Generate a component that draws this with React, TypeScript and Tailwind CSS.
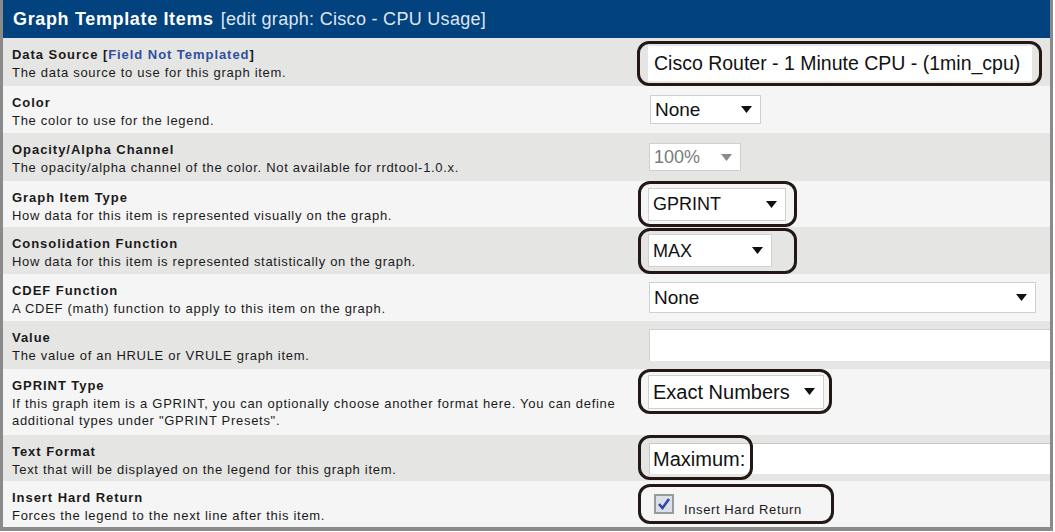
import React from "react";

const Arrow = ({ gray = false }: { gray?: boolean }) => (
  <svg width="11" height="7" viewBox="0 0 11 7" className="shrink-0">
    <polygon points="0,0 11,0 5.5,7" fill={gray ? "#8a8a8a" : "#111"} />
  </svg>
);

const Select = ({
  text,
  w,
  h,
  size = "text-[18px]",
  gray = false,
}: {
  text: string;
  w: string;
  h: string;
  size?: string;
  gray?: boolean;
}) => (
  <div
    className={`${w} ${h} flex items-center justify-between bg-white border border-[#d0d0d0] pl-[4px] pr-[8px] ${size} leading-none ${gray ? "text-[#7a7a7a]" : "text-[#111]"}`}
  >
    <span>{text}</span>
    <Arrow gray={gray} />
  </div>
);

const Row = ({
  shade,
  h,
  label,
  desc,
  children,
  align = "items-center",
}: {
  shade: boolean;
  h: string;
  label: React.ReactNode;
  desc: React.ReactNode;
  children?: React.ReactNode;
  align?: string;
}) => (
  <div className={`flex ${h} ${shade ? "bg-[#e5e5e4]" : "bg-[#f5f5f5]"}`}>
    <div className="w-[634px] pl-[9px] pt-[8px]">
      <div className="text-[13px] font-bold leading-[18px] tracking-[0.95px] text-[#1a1a1a]">{label}</div>
      <div className="text-[13px] leading-[17px] tracking-[0.7px] text-[#1a1a1a]">{desc}</div>
    </div>
    <div className={`flex-1 flex ${align}`}>{children}</div>
  </div>
);

const Note = ({ children, cls }: { children: React.ReactNode; cls: string }) => (
  <div className={`flex items-center rounded-[12px] border-[3px] border-[#231815] ${cls}`}>{children}</div>
);

export default function App() {
  return (
    <div
      className="w-[1055px] h-[532px] bg-white"
      style={{ fontFamily: '"Liberation Sans", Arial, sans-serif' }}
    >
      <div className="w-[1053px] border-l-[3px] border-r-[3px] border-b-[4px] border-[#8a8a8a]">
        <div className="h-[38px] bg-[#02427f] flex items-center pl-[10px] text-[18px] leading-none">
          <span className="font-bold text-white tracking-[0.65px]">Graph Template Items</span>
          <span className="text-[#dfe6ef] ml-[7px] tracking-[0.3px]">[edit graph: Cisco - CPU Usage]</span>
        </div>

        <Row
          shade
          h="h-[48px]"
          align="items-start pt-[3px]"
          label={
            <>
              Data Source <span>[</span>
              <span className="text-[#2f4f9f]">Field Not Templated</span>
              <span>]</span>
            </>
          }
          desc="The data source to use for this graph item."
        >
          <Note cls="w-[405px] h-[45px] pl-[8px]">
            <div className="w-[384px] h-[35px] bg-white flex items-center pl-[6px] text-[19.5px] text-[#111] leading-none">
              Cisco Router - 1 Minute CPU - (1min_cpu)
            </div>
          </Note>
        </Row>

        <Row shade={false} h="h-[47px]" label="Color" desc="The color to use for the legend.">
          <div className="ml-[13px]">
            <Select text="None" w="w-[111px]" h="h-[29px]" size="text-[19px]" />
          </div>
        </Row>

        <Row
          shade
          h="h-[48px]"
          label="Opacity/Alpha Channel"
          desc="The opacity/alpha channel of the color. Not available for rrdtool-1.0.x."
        >
          <div className="ml-[12px]">
            <Select text="100%" w="w-[92px]" h="h-[28px]" gray />
          </div>
        </Row>

        <Row
          shade={false}
          h="h-[46px]"
          label="Graph Item Type"
          desc="How data for this item is represented visually on the graph."
        >
          <Note cls="ml-[1px] w-[159px] h-[46px] pl-[7px]">
            <Select text="GPRINT" w="w-[138px]" h="h-[33px]" />
          </Note>
        </Row>

        <Row
          shade
          h="h-[47px]"
          label="Consolidation Function"
          desc="How data for this item is represented statistically on the graph."
        >
          <Note cls="ml-[1px] w-[159px] h-[46px] pl-[7px]">
            <Select text="MAX" w="w-[124px]" h="h-[33px]" />
          </Note>
        </Row>

        <Row
          shade={false}
          h="h-[47px]"
          label="CDEF Function"
          desc="A CDEF (math) function to apply to this item on the graph."
        >
          <div className="ml-[12px]">
            <Select text="None" w="w-[387px]" h="h-[31px]" size="text-[19px]" />
          </div>
        </Row>

        <Row shade h="h-[48px]" label="Value" desc="The value of an HRULE or VRULE graph item.">
          <div className="ml-[12px] flex-1 h-[32px] bg-white border-t border-l border-[#d0d0d0]" />
        </Row>

        <Row
          shade={false}
          h="h-[66px]"
          align="items-start"
          label="GPRINT Type"
          desc={
            <>
              If this graph item is a GPRINT, you can optionally choose another format here. You can define
              <br />
              additional types under "GPRINT Presets".
            </>
          }
        >
          <Note cls="ml-[1px] w-[194px] h-[45px] pl-[7px]">
            <Select text="Exact Numbers" w="w-[176px]" h="h-[34px]" size="text-[20px]" />
          </Note>
        </Row>

        <Row
          shade
          h="h-[46px]"
          label="Text Format"
          desc="Text that will be displayed on the legend for this graph item."
        >
          <div className="relative flex-1 h-[46px] flex items-center">
            <div className="ml-[12px] flex-1 h-[31px] bg-white border-t border-l border-[#c8c8c8] flex items-center pl-[3px] text-[20px] leading-none text-[#111]">
              Maximum:
            </div>
            <div className="absolute left-[1px] top-0 w-[115px] h-[45px] rounded-[12px] border-[3px] border-[#231815]" />
          </div>
        </Row>

        <Row
          shade={false}
          h="h-[46px]"
          label="Insert Hard Return"
          desc="Forces the legend to the next line after this item."
        >
          <Note cls="ml-[1px] w-[196px] h-[40px] pl-[13px] items-start pt-[7px]">
            <div className="w-[20px] h-[20px] border-[2px] border-[#9a9a9a] bg-[#dcdfe8] flex items-center justify-center">
              <svg width="14" height="14" viewBox="0 0 14 14">
                <path d="M2 7 L5.5 11 L12 2" stroke="#2b4aa0" strokeWidth="2.6" fill="none" />
              </svg>
            </div>
            <span className="ml-[10px] mt-[9px] text-[13px] tracking-[0.6px] leading-none text-[#1a1a1a]">Insert Hard Return</span>
          </Note>
        </Row>
      </div>
    </div>
  );
}
